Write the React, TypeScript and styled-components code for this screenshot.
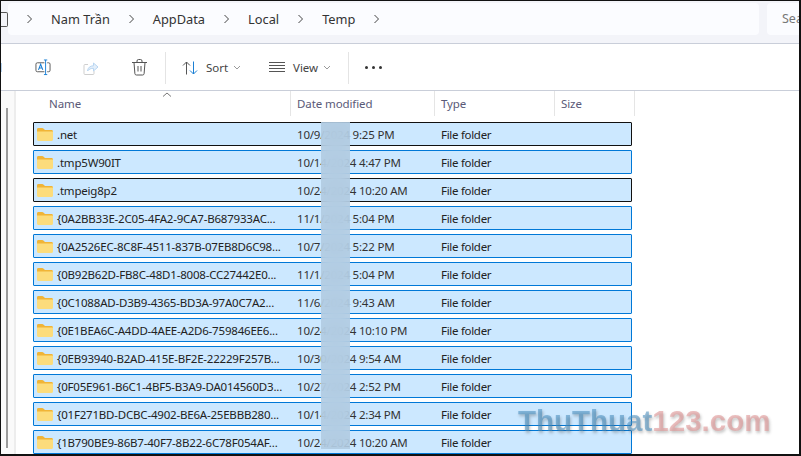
import styled, { createGlobalStyle } from "styled-components";

const GlobalStyle = createGlobalStyle`
  html, body {
    margin: 0;
    padding: 0;
    background: #fff;
  }
`;

const files = [
  { name: ".net", date: "10/9/2024 9:25 PM", focus: true },
  { name: ".tmp5W90IT", date: "10/14/2024 4:47 PM" },
  { name: ".tmpeig8p2", date: "10/24/2024 10:20 AM", focus: true },
  { name: "{0A2BB33E-2C05-4FA2-9CA7-B687933AC...", date: "11/1/2024 5:04 PM" },
  { name: "{0A2526EC-8C8F-4511-837B-07EB8D6C98...", date: "10/7/2024 5:22 PM" },
  { name: "{0B92B62D-FB8C-48D1-8008-CC27442E0...", date: "11/1/2024 5:04 PM" },
  { name: "{0C1088AD-D3B9-4365-BD3A-97A0C7A2...", date: "11/6/2024 9:43 AM" },
  { name: "{0E1BEA6C-A4DD-4AEE-A2D6-759846EE6...", date: "10/24/2024 10:10 PM" },
  { name: "{0EB93940-B2AD-415E-BF2E-22229F257B...", date: "10/30/2024 9:54 AM" },
  { name: "{0F05E961-B6C1-4BF5-B3A9-DA014560D3...", date: "10/27/2024 2:52 PM" },
  { name: "{01F271BD-DCBC-4902-BE6A-25EBBB280...", date: "10/14/2024 2:34 PM" },
  { name: "{1B790BE9-86B7-40F7-8B22-6C78F054AF...", date: "10/24/2024 10:20 AM" },
];

const crumbs = ["Nam Trần", "AppData", "Local", "Temp"];

const Chevron = () => (
  <svg width="7" height="10" viewBox="0 0 7 10">
    <path d="M1.5 1l4 4-4 4" fill="none" stroke="#444" strokeWidth="1" />
  </svg>
);

const SmallCaret = () => (
  <CaretWrap>
    <svg width="8" height="5" viewBox="0 0 8 5">
      <path d="M1 1l3 3 3-3" fill="none" stroke="#9a9a9a" strokeWidth="1" />
    </svg>
  </CaretWrap>
);

const FolderIcon = () => (
  <svg width="16" height="13" viewBox="0 0 16 13">
    <path d="M0 1.500C0 .7.5 0 1.300 0h3.900c.5 0 .9.2 1.200.5L8 2h6.500c.8 0 1.500.6 1.500 1.400V4H0z" fill="#f0b437" />
    <path d="M0 3.500h16v8c0 .8-.7 1.500-1.500 1.500h-13C.7 13 0 12.300 0 11.500z" fill="#fcdc7c" />
  </svg>
);

const RenameIcon = () => (
  <svg width="17" height="17" viewBox="0 0 17 17">
    <path d="M10 3.500H2.500a1.500 1.500 0 0 0-1.500 1.500v6.500a1.500 1.500 0 0 0 1.500 1.500H10M13 3.500h1.500a1.500 1.500 0 0 1 1.500 1.500v6.500a1.500 1.500 0 0 1-1.500 1.500H13" fill="none" stroke="#555" />
    <path d="M9.500.5h3.500M11.250.5v15.500M9.500 16h3.500" fill="none" stroke="#1a7fd4" />
    <path d="M3.700 11l2.300-6 2.300 6M4.500 9h3" fill="none" stroke="#1a7fd4" strokeWidth="1.100" />
  </svg>
);

const ShareIcon = () => (
  <svg width="16" height="16" viewBox="0 0 16 16">
    <path d="M11 11v2.500a1 1 0 0 1-1 1H2a1 1 0 0 1-1-1v-8a1 1 0 0 1 1-1h3" fill="none" stroke="#cfcfcf" />
    <path d="M4.500 11c.4-3.500 2.800-5.200 6-5.200V3l4.500 4-4.500 4V8.300c-2.500 0-4.500.8-6 2.700z" fill="#e4effa" stroke="#b9d6f2" />
  </svg>
);

const TrashIcon = () => (
  <svg width="15" height="17" viewBox="0 0 15 17">
    <path d="M0 3.500h15M5 3.500V2a1.500 1.500 0 0 1 1.500-1.500h2A1.500 1.500 0 0 1 10 2v1.500M2 3.500l.9 11.200a1.500 1.500 0 0 0 1.500 1.300h6.200a1.500 1.500 0 0 0 1.500-1.300L13 3.500M6 7v5.500M9 7v5.500" fill="none" stroke="#555" />
  </svg>
);

const SortIcon = () => (
  <svg width="16" height="14" viewBox="0 0 16 14">
    <path d="M4.500 13.500V1M1 4.500l3.500-3.500 3.500 3.500" fill="none" stroke="#555" />
    <path d="M11.500.5V13M8 9.500l3.500 3.500 3.500-3.500" fill="none" stroke="#1a7fd4" />
  </svg>
);

const ViewIcon = () => (
  <svg width="16" height="11" viewBox="0 0 16 11">
    <path d="M0 .5h16M0 3.500h16M0 6.500h16M0 9.500h16" fill="none" stroke="#555" />
  </svg>
);

const App = () => {
  return (
    <>
      <GlobalStyle />
      <Window>
        <AddressBar>
          <MonitorEdge />
          <AddressPill>
            {crumbs.map((crumb) => (
              <Crumb key={crumb}>
                <Chevron />
                <span>{crumb}</span>
              </Crumb>
            ))}
            <Chevron />
          </AddressPill>
          <SearchPill>Sea</SearchPill>
        </AddressBar>
        <Toolbar>
          <ToolEdge />
          <ToolGroup>
            <ToolButton>
              <RenameIcon />
            </ToolButton>
            <ToolButton>
              <ShareIcon />
            </ToolButton>
            <ToolButton>
              <TrashIcon />
            </ToolButton>
          </ToolGroup>
          <ToolSeparator />
          <LabelButton $width={87}>
            <SortIcon />
            <span>Sort</span>
            <SmallCaret />
          </LabelButton>
          <LabelButton $width={95}>
            <ViewIcon />
            <span>View</span>
            <SmallCaret />
          </LabelButton>
          <ToolSeparator />
          <Dots>
            <i />
            <i />
            <i />
          </Dots>
        </Toolbar>
        <Body>
          <Sidebar>
            <SidebarThumb />
          </Sidebar>
          <Listing>
            <HeaderRow>
              <SortCaret>
                <svg width="10" height="5" viewBox="0 0 10 5">
                  <path d="M1 4.500l4-3.500 4 3.500" fill="none" stroke="#777" />
                </svg>
              </SortCaret>
              <HeaderCell $width={275} $first>
                Name
              </HeaderCell>
              <HeaderCell $width={144}>Date modified</HeaderCell>
              <HeaderCell $width={120}>Type</HeaderCell>
              <HeaderCell $width={80}>Size</HeaderCell>
            </HeaderRow>
            <Rows>
              {files.map((file) => (
                <Row key={file.name} $focus={file.focus}>
                  <NameCell>
                    <FolderIcon />
                    <span>{file.name}</span>
                  </NameCell>
                  <DateCell>{file.date}</DateCell>
                  <TypeCell>File folder</TypeCell>
                </Row>
              ))}
            </Rows>
            <BlurBand />
          </Listing>
        </Body>
        <Watermark>
          <span>ThuThuat</span>
          <b>123.com</b>
        </Watermark>
      </Window>
    </>
  );
};

export default App;

const Window = styled.div`
  position: relative;
  width: 801px;
  height: 456px;
  box-sizing: border-box;
  border-top: 1px solid #111;
  border-left: 1px solid #111;
  border-right: 2px solid #111;
  border-bottom: 2px solid #111;
  background: #fff;
  overflow: hidden;
  font-family: "Noto Sans", "Open Sans", sans-serif;
  color: #1c1c1c;
`;

const AddressBar = styled.div`
  display: flex;
  align-items: flex-start;
  height: 43px;
  padding-top: 2px;
  box-sizing: border-box;
  background: #f3f4f9;
  border-bottom: 1px solid #c9ced9;
`;

const MonitorEdge = styled.div`
  width: 6px;
  height: 13px;
  margin-top: 9px;
  border: 1px solid #555;
  border-left: 0;
  border-radius: 0 2px 2px 0;
  flex: none;
`;

const AddressPill = styled.div`
  display: flex;
  align-items: center;
  gap: 18px;
  width: 751px;
  height: 32px;
  padding-left: 18px;
  box-sizing: border-box;
  margin-right: 8px;
  background: #fbfcff;
  border-radius: 4px;
  font-size: 12.800px;
  color: #333;
  flex: none;
`;

const Crumb = styled.div`
  display: flex;
  align-items: center;
  gap: 18px;
`;

const SearchPill = styled.div`
  flex: 1;
  height: 32px;
  line-height: 32px;
  padding-left: 15px;
  background: #fbfcff;
  border-radius: 4px 0 0 4px;
  font-size: 12.500px;
  color: #777;
  overflow: hidden;
`;

const Toolbar = styled.div`
  display: flex;
  align-items: center;
  height: 47px;
  box-sizing: border-box;
  padding-top: 1px;
  border-bottom: 1px solid #c9ced9;
`;

const ToolEdge = styled.div`
  width: 1px;
  height: 9px;
  margin-right: 33px;
  background: #b9d6f2;
`;

const ToolGroup = styled.div`
  display: flex;
  align-items: center;
  gap: 32px;
  margin-right: 18px;
`;

const ToolButton = styled.div`
  display: flex;
  align-items: center;
  justify-content: center;
  width: 16px;
  height: 18px;
`;

const ToolSeparator = styled.div`
  width: 1px;
  height: 32px;
  background: #e4e4e4;
`;

const LabelButton = styled.div<{ $width: number }>`
  display: flex;
  align-items: center;
  gap: 8px;
  width: ${(p) => p.$width}px;
  padding-left: 16px;
  box-sizing: border-box;
  font-size: 11.500px;
  color: #444;
`;

const CaretWrap = styled.span`
  display: flex;
  margin-left: -3px;
`;

const Dots = styled.div`
  display: flex;
  gap: 4px;
  margin-left: 16px;

  i {
    width: 3px;
    height: 3px;
    border-radius: 50%;
    background: #333;
  }
`;

const Body = styled.div`
  display: flex;
  height: 363px;
`;

const Sidebar = styled.div`
  width: 15px;
  flex: none;
  padding: 17px 0 0 5px;
  box-sizing: border-box;
  background: #fafafa;
  border-right: 2px solid #ededed;
`;

const SidebarThumb = styled.div`
  width: 2px;
  height: 340px;
  background: #9b9b9b;
`;

const Listing = styled.div`
  position: relative;
  flex: 1;
`;

const HeaderRow = styled.div`
  position: relative;
  display: flex;
  height: 26px;
`;

const SortCaret = styled.div`
  position: absolute;
  left: 146px;
  top: 0;
  line-height: 0;
`;

const HeaderCell = styled.div<{ $width: number; $first?: boolean }>`
  width: ${(p) => p.$width}px;
  height: 25px;
  line-height: 25px;
  box-sizing: border-box;
  padding-left: ${(p) => (p.$first ? "33px" : "6px")};
  border-right: 1px solid #e5e5e5;
  font-size: 11.500px;
  letter-spacing: -0.1px;
  color: #5a5a78;
`;

const Rows = styled.div`
  display: flex;
  flex-direction: column;
  gap: 4px;
  margin: 5px 0 0 17px;
  width: 599px;
`;

const Row = styled.div<{ $focus?: boolean }>`
  display: flex;
  align-items: center;
  height: 24px;
  flex: none;
  box-sizing: border-box;
  background: #cce8ff;
  border: 1px solid ${(p) => (p.$focus ? "#111" : "#0078d7")};
  border-radius: 1px;
  font-size: 11.500px;
  letter-spacing: -0.2px;
  color: #222;
`;

const NameCell = styled.div`
  display: flex;
  align-items: center;
  gap: 4px;
  width: 263px;
  flex: none;
  padding-left: 3px;
  box-sizing: border-box;
  white-space: nowrap;

  svg {
    flex: none;
  }
`;

const DateCell = styled.div`
  width: 144px;
  flex: none;
  white-space: nowrap;
  color: #333;
`;

const TypeCell = styled.div`
  flex: 1;
  letter-spacing: -0.3px;
`;

const BlurBand = styled.div`
  position: absolute;
  left: 305px;
  top: 31px;
  width: 29px;
  height: 327px;
  background: rgba(178, 203, 226, 0.85);
  backdrop-filter: blur(8px);
`;

const Watermark = styled.div`
  position: absolute;
  left: 517px;
  top: 403px;
  font-family: "Liberation Sans", sans-serif;
  font-size: 29.500px;
  font-weight: 700;
  white-space: nowrap;
  filter: blur(0.4px);
  text-shadow: 1px 2px 3px rgba(60, 60, 60, 0.3);

  span {
    color: rgba(70, 140, 190, 0.55);
  }

  b {
    color: rgba(225, 150, 150, 0.6);
  }
`;
